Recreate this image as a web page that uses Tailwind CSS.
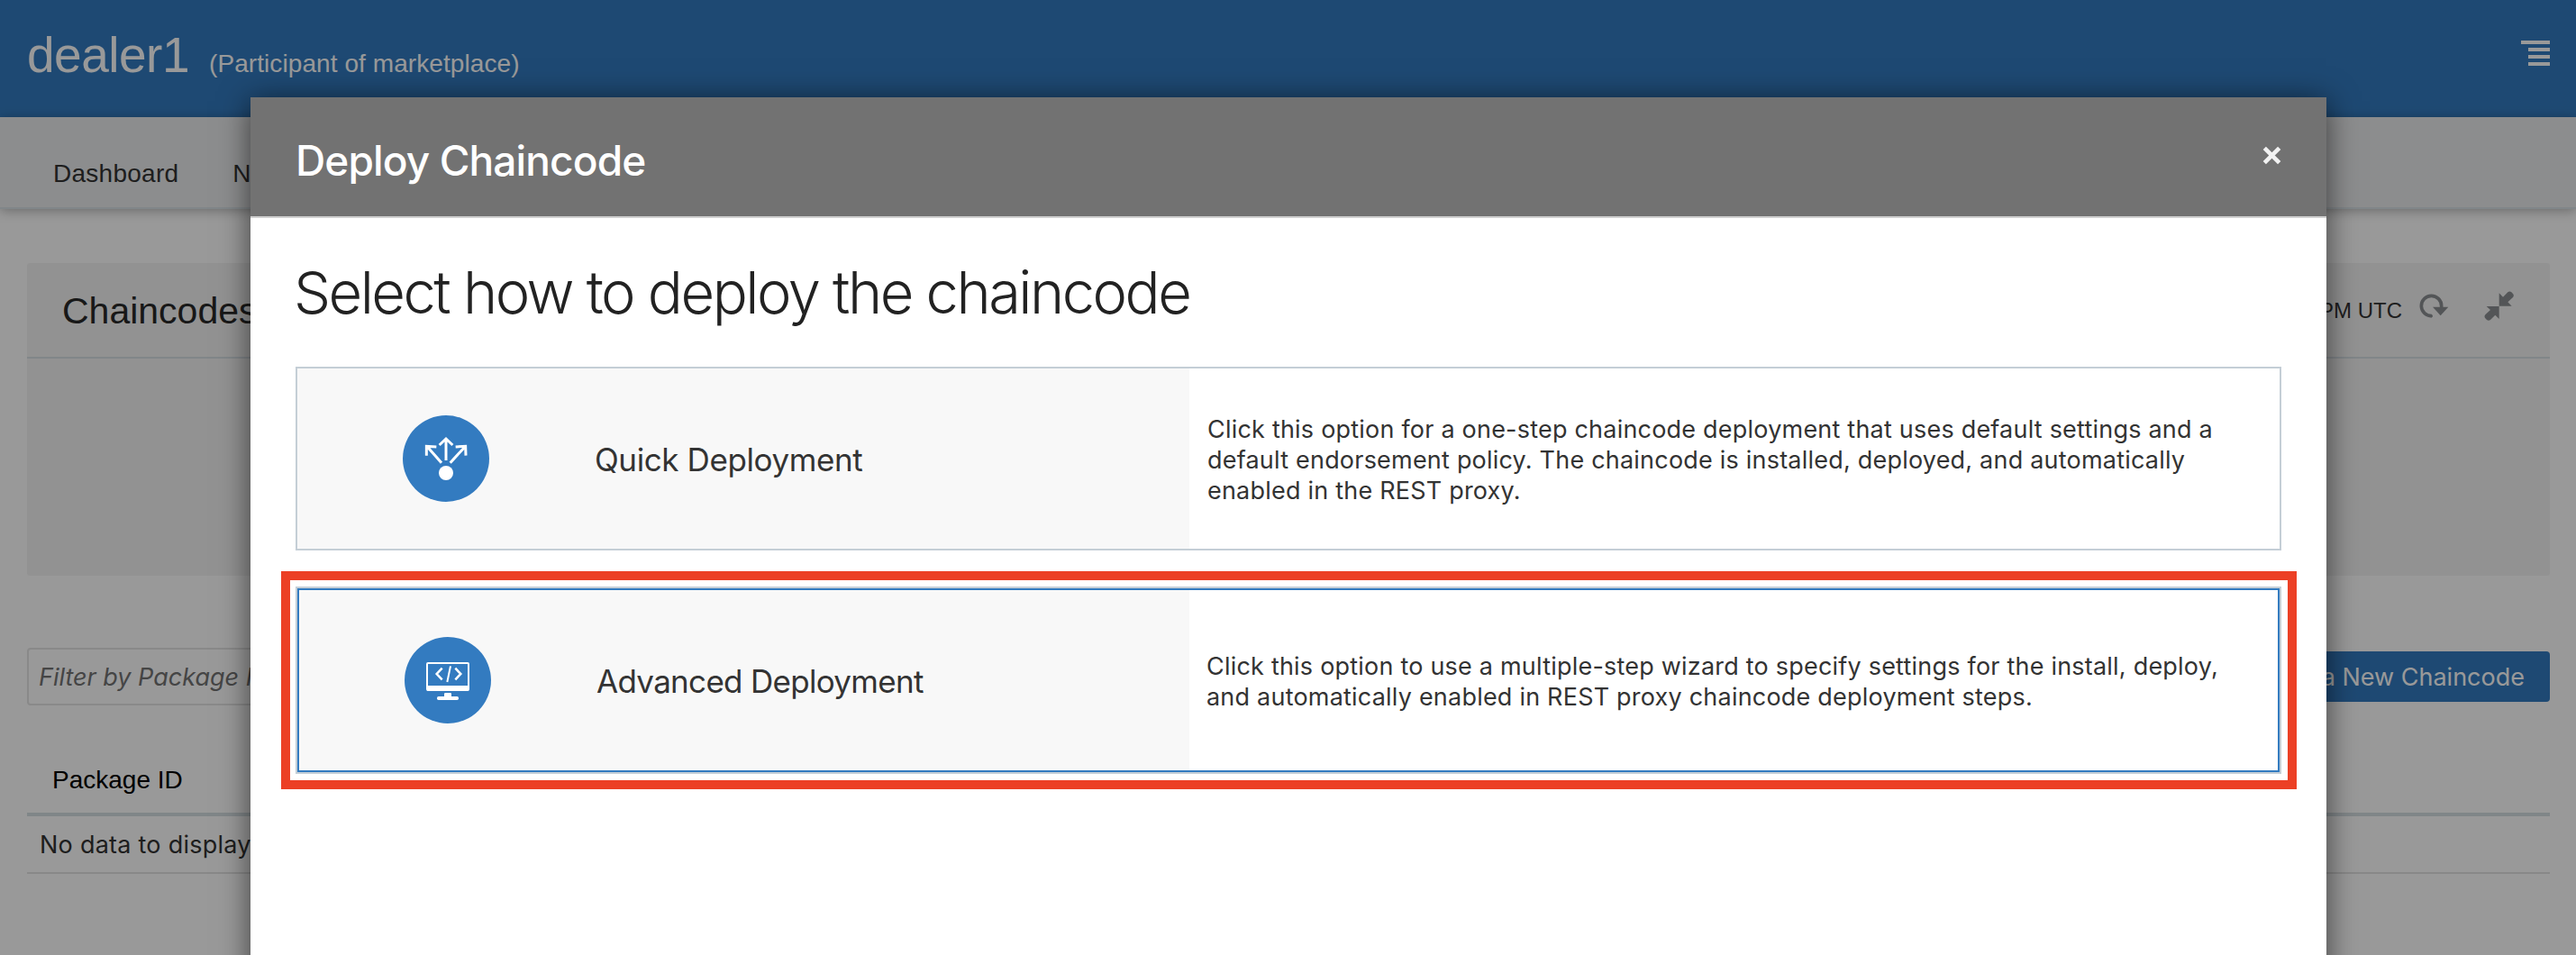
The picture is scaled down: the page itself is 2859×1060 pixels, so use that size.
<!DOCTYPE html>
<html lang="en">
<head>
<meta charset="utf-8">
<title>Deploy Chaincode</title>
<script src="https://cdn.jsdelivr.net/npm/@tailwindcss/browser@4"></script>
</head>
<body class="relative h-[1060px] overflow-hidden bg-white font-['Liberation_Sans',sans-serif] text-[#333]">

<!-- Console page behind the dialog -->
<div class="flex h-[1060px] flex-col whitespace-nowrap">
  <header class="flex h-[130px] shrink-0 justify-between bg-[#337bc0] pl-[30px] pr-[29px] text-white">
    <div class="flex items-baseline gap-[22px] pt-[33px]">
      <h1 class="text-[55px] leading-[56px] tracking-[-0.5px]">dealer1</h1>
      <span class="text-[28px] leading-[56px] tracking-[0.08px]">(Participant of marketplace)</span>
    </div>
    <svg class="mt-[45px] h-[28px] w-[32px]" viewBox="0 0 32 28" fill="currentColor"><path d="M0 0h32v4H0zM8 8h24v4H8zM8 16h24v4H8zM8 24h24v4H8z"/></svg>
  </header>
  <nav class="flex h-[102px] shrink-0 gap-[60px] border-b-2 border-[#d8e0e5] bg-[#eaebed] pl-[59px] pt-[31px] text-[28px] leading-[64px] tracking-[0.26px] shadow-[0_2px_12px_rgba(0,0,0,0.3)]">
    <span>Dashboard</span>
    <span>N</span>
  </nav>

  <main class="flex flex-col px-[30px] pr-[29px] pt-[60px]">
    <section class="h-[347px] rounded-[3px] bg-[#f4f4f4]">
      <div class="flex h-[106px] items-center justify-between border-b-2 border-[#d8e0e5] pl-[39px] pr-[39px]">
        <h2 class="mt-[2px] text-[41px] leading-[48px] text-[#282828]">Chaincodes</h2>
        <div class="flex items-center">
          <span class="mr-[19px] mt-[1px] text-[24px] leading-[32px]">PM UTC</span>
          <svg class="mt-[-9px] h-[34px] w-[34px] text-[#8a8e91]" viewBox="680 967 102 102">
            <path d="M722 1050A33.500 33.500 0 1 1 754 1017V1022" fill="none" stroke="currentColor" stroke-width="11"/>
            <circle cx="720" cy="1050" r="5" fill="currentColor"/>
            <path d="M725 1020h52l-26 29z" fill="currentColor"/>
          </svg>
          <svg class="ml-[38px] mt-[-9px] h-[34px] w-[34px] text-[#8a8e91]" viewBox="895 967 102 102" fill="currentColor">
            <path d="M945 974l13 13 16-16q6-5 12 0l5 5q5 6 0 12l-17 16 13 13h-42z"/>
            <path d="M945 1060l-13-13-16 16q-6 5-12 0l-5-5q-5-6 0-12l17-16-13-12h42z"/>
          </svg>
        </div>
      </div>
    </section>

    <div class="mt-[80px] flex h-[64px] items-center justify-between">
      <div class="flex h-[64px] w-[700px] items-center rounded-[4px] border-2 border-[#e4e4e4] pl-[11px] pt-[2px] font-['Inter',sans-serif] text-[27px] italic text-[#737373]">Filter by Package I</div>
      <button class="flex h-[56px] items-center rounded-[4px] bg-[#337bc0] px-[28px] pt-[2px] font-['Inter',sans-serif] text-[27px] text-white">Deploy a New Chaincode</button>
    </div>

    <div class="mt-[31px] flex h-[92px] flex-col justify-end border-b-4 border-[#d6dfe3] pb-[18px] pl-[28px] text-[28px] leading-[36px] text-black">Package ID</div>
    <div class="flex h-[64px] items-center border-b-2 border-[#e3e3e3] pl-[14px] pt-[2px] font-['Inter',sans-serif] text-[27px] leading-[34px] tracking-[0.25px]">No data to display.</div>
  </main>
</div>

<!-- Backdrop and dialog -->
<div class="absolute inset-0 flex flex-col bg-black/40 px-[278px] pr-[277px] pt-[108px]">
  <div class="relative h-[1000px] shrink-0 bg-white font-['Inter',sans-serif] shadow-[0_4px_32px_rgba(0,0,0,0.6)]">
    <div class="flex h-[134px] items-center justify-between border-b-2 border-[#d0d0d0] bg-[#727272] pl-[50px] pr-[50px]">
      <h2 class="mt-[8px] text-[46px] font-medium leading-[56px] tracking-[-0.88px] text-white">Deploy Chaincode</h2>
      <svg class="mt-[-4px] h-[21px] w-[21px]" viewBox="0 0 21 21" fill="none" stroke="#f2f2f2" stroke-width="4.600"><path d="M2.300 2.300L18.700 18.700M18.700 2.300L2.300 18.700"/></svg>
    </div>

    <div class="flex flex-col px-[50px] pt-[43px]">
      <h3 class="ml-[-2px] whitespace-nowrap text-[65px] font-light leading-[80px] tracking-[-2.52px] text-[#222]">Select how to deploy the chaincode</h3>

      <div class="mt-[42px] flex h-[204px] border-2 border-[#c4ced6]">
        <div class="flex w-[990px] items-center bg-[#f8f8f8] pl-[117px]">
          <svg class="h-[96px] w-[96px]" viewBox="81 93 288 288">
            <circle cx="225" cy="237" r="144" fill="#337bc0"/>
            <circle cx="225" cy="285" r="24" fill="#fff"/>
            <g fill="none" stroke="#fff" stroke-width="9">
              <path d="M225 243V172M203 192l22-21 22 21"/>
              <path d="M210 251L163 198M160 227V196l33 2"/>
              <path d="M239 251L288 198M291 227l-1-31-33 2"/>
            </g>
          </svg>
          <span class="ml-[117px] mt-[3px] text-[35px] tracking-[-0.4px]">Quick Deployment</span>
        </div>
        <p class="flex items-center whitespace-nowrap pl-[20px] pt-[4px] text-[27px] leading-[34px] tracking-[0.21px]">Click this option for a one-step chaincode deployment that uses default settings and a<br>default endorsement policy. The chaincode is installed, deployed, and automatically<br>enabled in the REST proxy.</p>
      </div>

      <div class="mt-[40px] h-[208px] border-2 border-[#c4ced6]">
        <div class="flex h-full border-2 border-[#337bc0]">
          <div class="flex w-[988px] items-center bg-[#f8f8f8] pl-[117px]">
            <svg class="h-[96px] w-[96px]" viewBox="87 111 288 288">
              <circle cx="231" cy="255" r="144" fill="#337bc0"/>
              <rect x="162" y="198" width="138" height="90" rx="3" fill="none" stroke="#fff" stroke-width="6"/>
              <path d="M162 273h138v17H162zM219 310v-9q0-4 4-4h16q4 0 4 4v9z" fill="#fff"/>
              <rect x="195" y="309" width="72" height="12" rx="5" fill="#fff"/>
              <path d="M212 215l-18 19 18 19M256 215l18 19-18 19" fill="none" stroke="#fff" stroke-width="7.500"/>
              <path d="M240 208l-11 53" stroke="#fff" stroke-width="6"/>
            </svg>
            <span class="ml-[117px] mt-[3px] text-[35px] tracking-[-0.7px]">Advanced Deployment</span>
          </div>
          <p class="flex items-center whitespace-nowrap pl-[19px] pt-[3px] text-[27px] leading-[34px] tracking-[0.21px]">Click this option to use a multiple-step wizard to specify settings for the install, deploy,<br>and automatically enabled in REST proxy chaincode deployment steps.</p>
        </div>
      </div>
    </div>

    <!-- Callout frame around the advanced option -->
    <div class="pointer-events-none absolute left-[34px] top-[526px] h-[242px] w-[2237px] border-[10px] border-[#ec4025]"></div>
  </div>
</div>
</body>
</html>
